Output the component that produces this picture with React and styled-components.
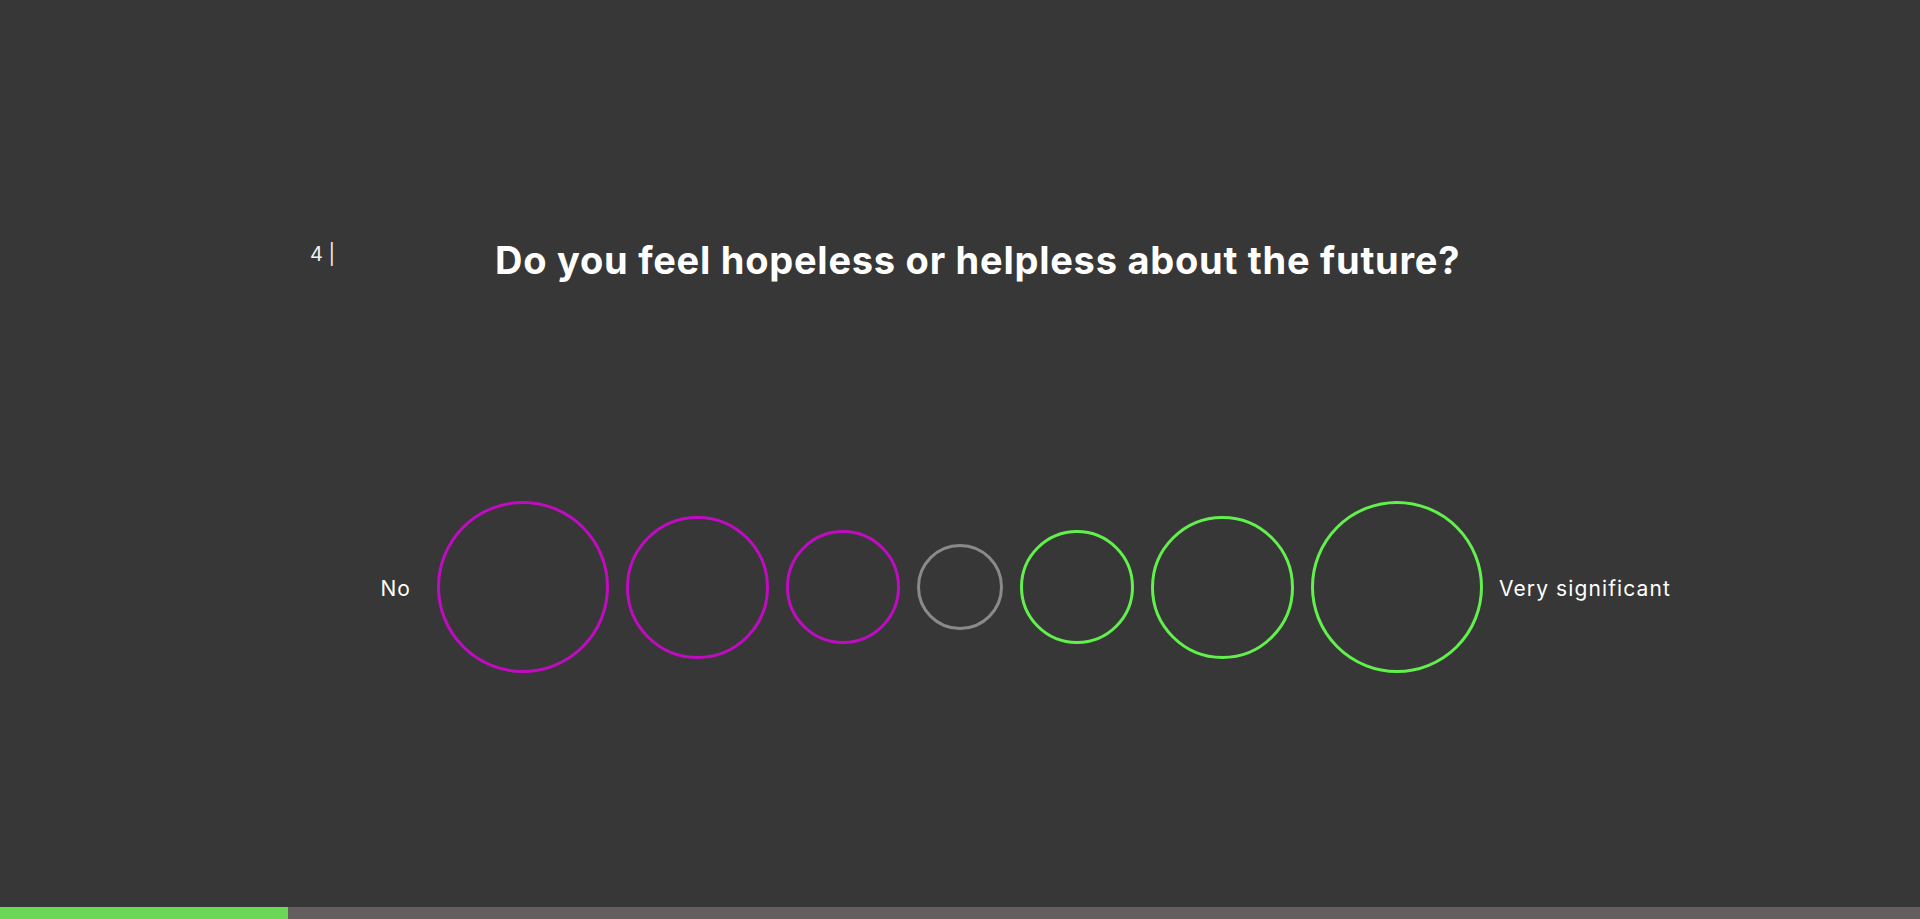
import React from "react";
import styled, { createGlobalStyle } from "styled-components";

const Global = createGlobalStyle`
  html, body { margin: 0; padding: 0; background: #373737; }
  body { font-family: Inter, "Noto Sans", sans-serif; color: #ffffff; }
  * { box-sizing: border-box; }
`;

const Page = styled.div`
  min-height: 919px;
  height: 100vh;
  display: flex;
  flex-direction: column;
  background: #373737;
  overflow: hidden;
`;

const Header = styled.div`
  width: 1300px;
  margin: 237px auto 0;
  display: grid;
  grid-template-columns: auto 1fr;
  align-items: start;
`;

const Number = styled.div`
  font-size: 20px;
  line-height: 34px;
  font-weight: 400;
  color: #f2f2f2;
`;

const Title = styled.h1`
  margin: 0;
  padding-left: 10px;
  text-align: center;
  font-size: 38px;
  line-height: 46px;
  font-weight: 700;
  letter-spacing: 0.75px;
  color: #ffffff;
`;

const Scale = styled.div`
  margin-top: 218px;
  display: grid;
  grid-template-columns: 1fr auto 1fr;
  align-items: center;
`;

const Label = styled.div`
  font-size: 21px;
  line-height: 28px;
  font-weight: 400;
  letter-spacing: 1.1px;
  padding-top: 3px;
  color: #ffffff;
  justify-self: ${(p) => (p.$side === "left" ? "end" : "start")};
  margin: ${(p) => (p.$side === "left" ? "0 26px 0 0" : "0 0 0 16px")};
`;

const Circles = styled.div`
  display: flex;
  align-items: center;
  gap: 17px;
`;

const Circle = styled.button`
  width: ${(p) => p.$size}px;
  height: ${(p) => p.$size}px;
  border-radius: 50%;
  border: 3px solid ${(p) => p.$color};
  background: transparent;
  padding: 0;
  cursor: pointer;
  flex: none;
`;

const Progress = styled.div`
  margin-top: auto;
  height: 12px;
  background: #645f5e;
  display: flex;
`;

const ProgressFill = styled.div`
  height: 100%;
  background: #6ad856;
`;

const options = [
  { size: 172, color: "#c00cc0" },
  { size: 143, color: "#c00cc0" },
  { size: 114, color: "#c00cc0" },
  { size: 86, color: "#8a8a8a" },
  { size: 114, color: "#62f04d" },
  { size: 143, color: "#62f04d" },
  { size: 172, color: "#62f04d" },
];

export default function App() {
  return (
    <>
      <Global />
      <Page>
        <Header>
          <Number>4 |</Number>
          <Title>Do you feel hopeless or helpless about the future?</Title>
        </Header>
        <Scale>
          <Label $side="left">No</Label>
          <Circles>
            {options.map((o, i) => (
              <Circle key={i} $size={o.size} $color={o.color} aria-label={`Option ${i + 1}`} />
            ))}
          </Circles>
          <Label $side="right">Very significant</Label>
        </Scale>
        <Progress>
          <ProgressFill style={{ width: "288px" }} />
        </Progress>
      </Page>
    </>
  );
}
